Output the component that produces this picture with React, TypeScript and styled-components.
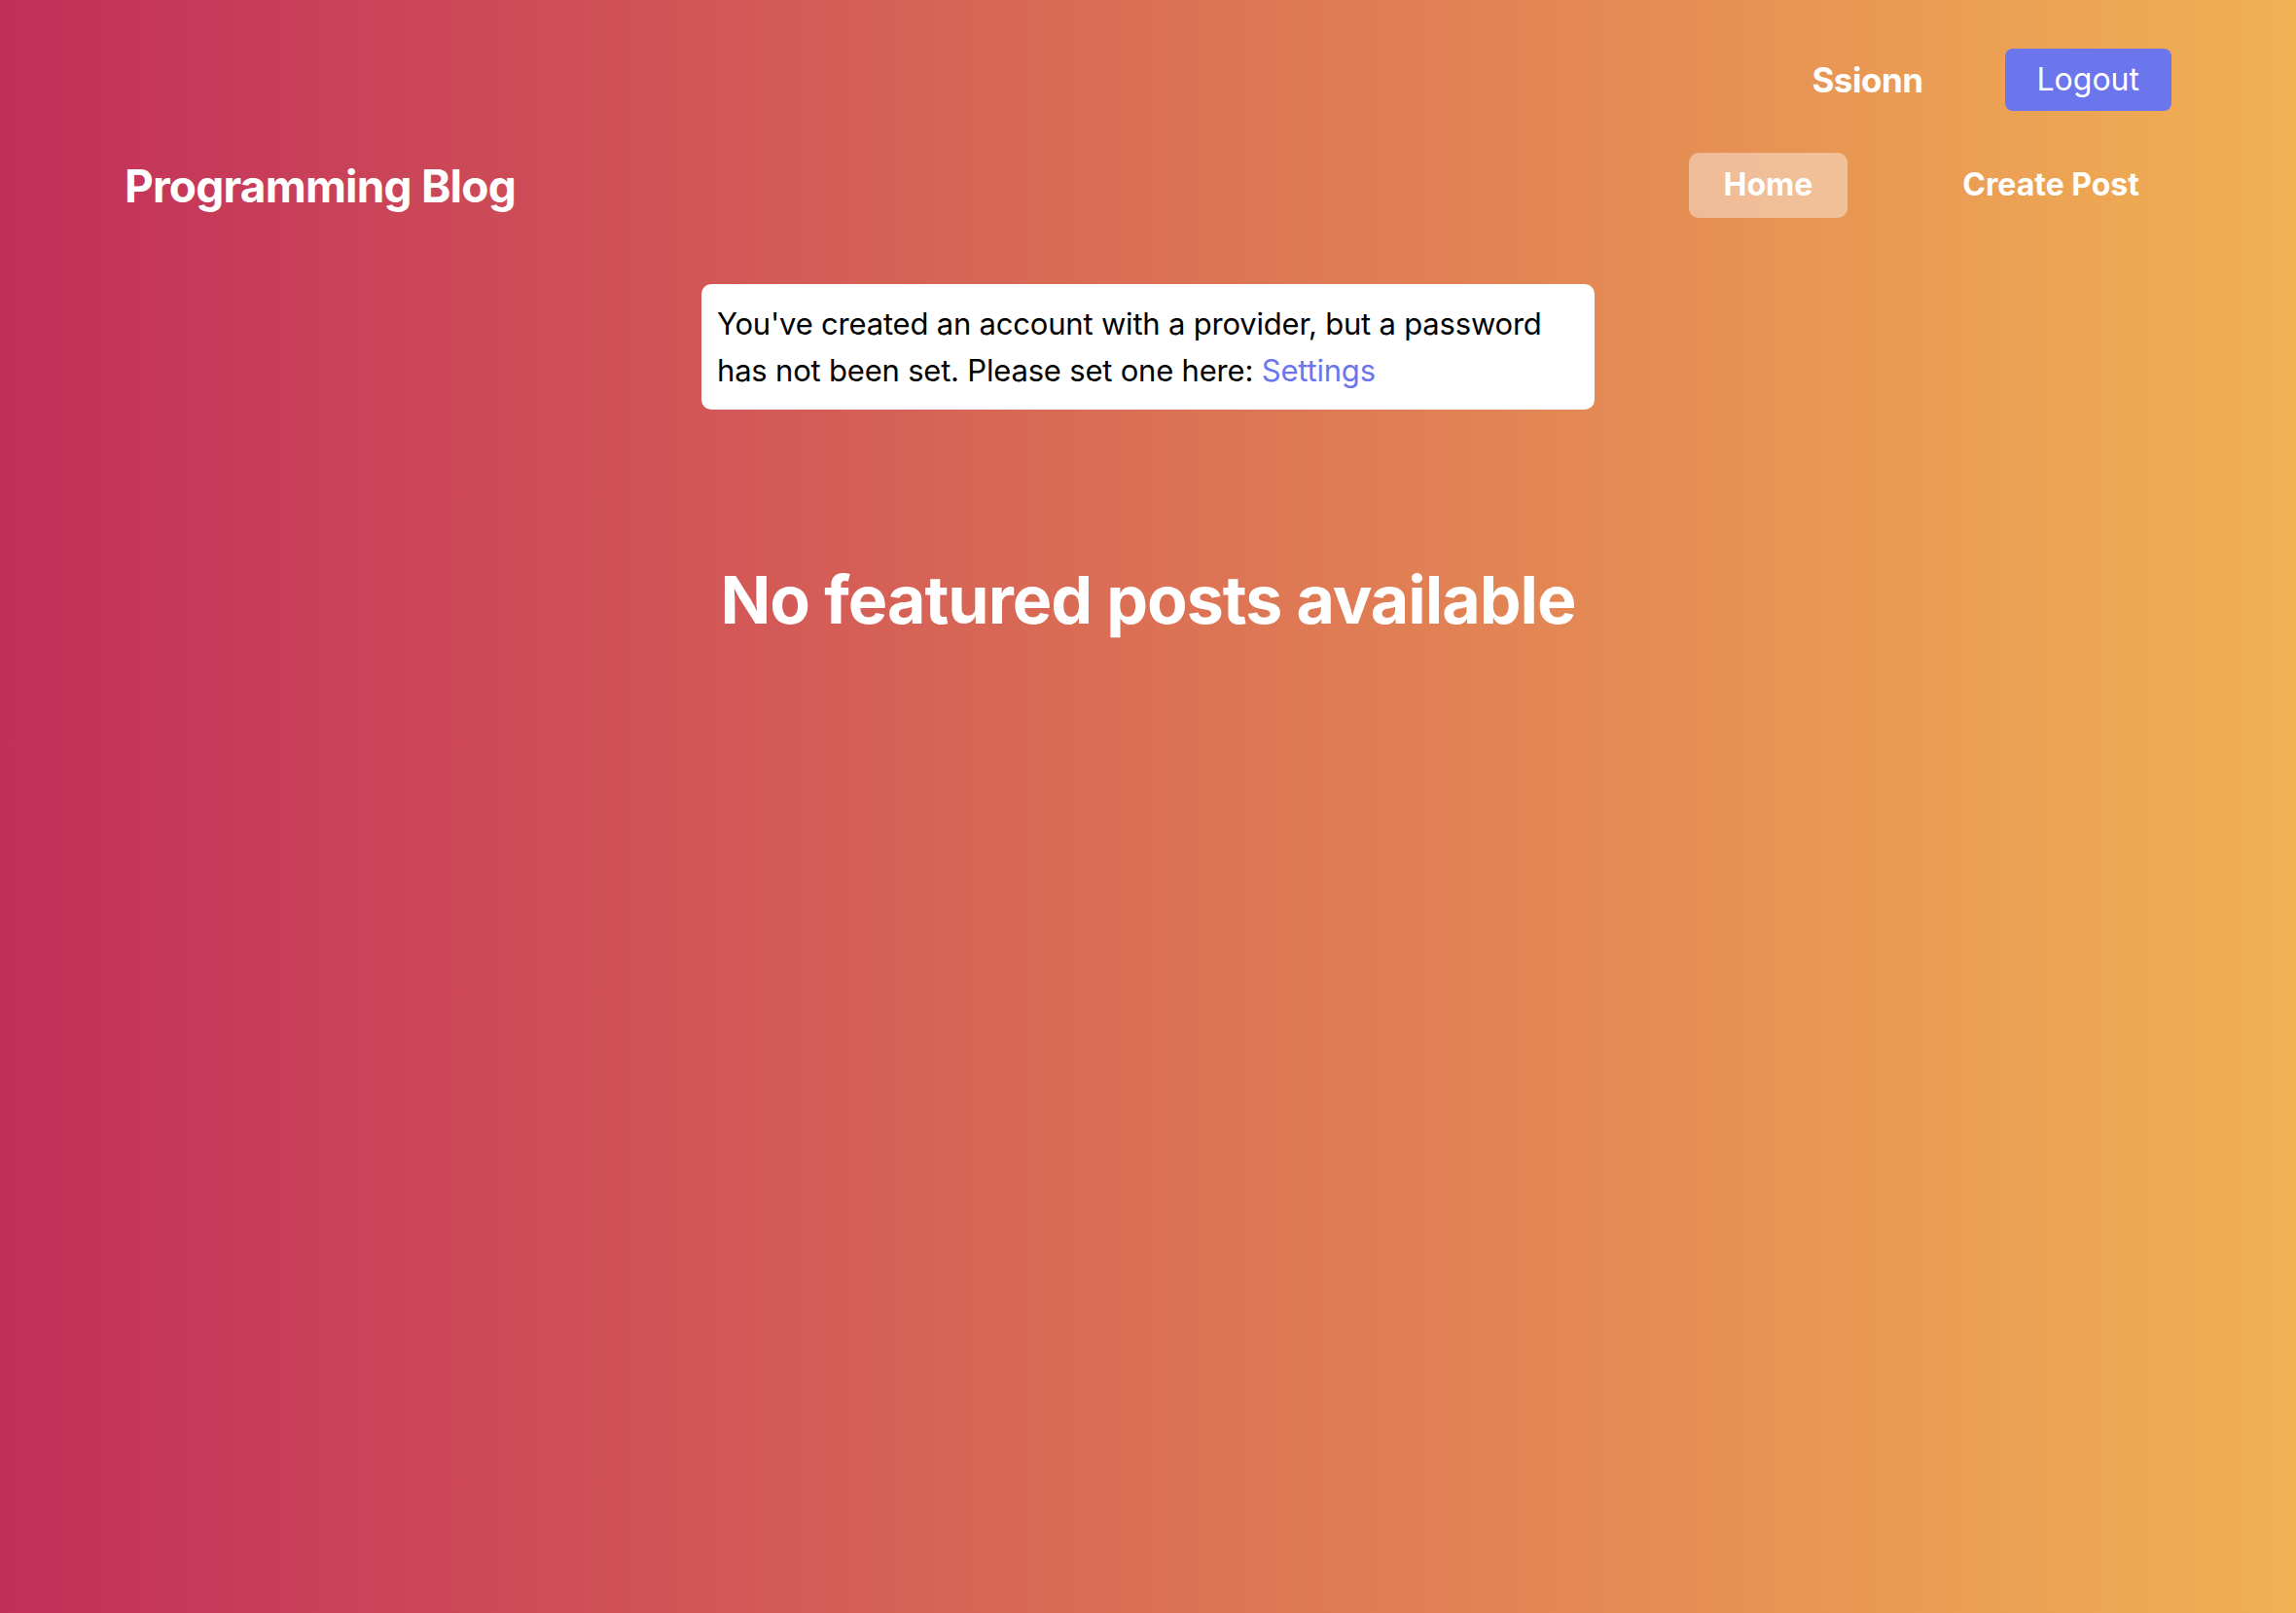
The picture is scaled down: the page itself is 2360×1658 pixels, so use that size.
import React from "react";
import styled, { createGlobalStyle } from "styled-components";

const GlobalStyle = createGlobalStyle`
  html, body {
    margin: 0;
    padding: 0;
  }
  body {
    font-family: Inter, "Noto Sans", "Liberation Sans", sans-serif;
    -webkit-font-smoothing: antialiased;
  }
`;

const Page = styled.div`
  min-height: 100vh;
  background: linear-gradient(to right, #c22e5a 0%, #db7055 50%, #f1b153 100%);
  color: white;
`;

const TopBar = styled.div`
  display: flex;
  justify-content: flex-end;
  align-items: center;
  gap: 84px;
  padding: 50px 128px 0;
`;

const UserName = styled.span`
  font-size: 35px;
  font-weight: 700;
  line-height: 48px;
  letter-spacing: -0.5px;
`;

const LogoutButton = styled.button`
  background-color: #6b76ec;
  color: white;
  border: none;
  border-radius: 8px;
  padding: 8px 33px;
  font-family: inherit;
  font-size: 32px;
  line-height: 48px;
  cursor: pointer;
`;

const NavBar = styled.nav`
  display: flex;
  justify-content: space-between;
  align-items: center;
  padding: 43px 125px 0 128px;
`;

const Brand = styled.h1`
  margin: 0;
  font-size: 46px;
  font-weight: 700;
  line-height: 64px;
  letter-spacing: -0.8px;
`;

const NavLinks = styled.div`
  display: flex;
  align-items: center;
  gap: 82px;
`;

const NavLink = styled.a<{ $active?: boolean }>`
  display: block;
  padding: 9px 36px 10px;
  border-radius: 10px;
  font-size: 32px;
  font-weight: 700;
  line-height: 48px;
  color: white;
  text-decoration: none;
  background-color: ${(p) => (p.$active ? "rgba(255, 255, 255, 0.4)" : "transparent")};
`;

const Main = styled.main`
  display: flex;
  flex-direction: column;
  align-items: center;
  padding-top: 68px;
`;

const Notice = styled.div`
  box-sizing: border-box;
  width: 918px;
  padding: 17px 16px 16px;
  background: white;
  color: #000;
  border-radius: 10px;
  font-size: 31px;
  line-height: 48px;
  letter-spacing: -0.2px;
`;

const NoticeLink = styled.a`
  color: #6b76ec;
  text-decoration: none;
`;

const EmptyHeading = styled.h2`
  margin: 155px 0 0;
  font-size: 68px;
  font-weight: 700;
  line-height: 80px;
  letter-spacing: -1px;
  color: white;
`;

const App = () => {
  return (
    <Page>
      <GlobalStyle />
      <header>
        <TopBar>
          <UserName>Ssionn</UserName>
          <LogoutButton>Logout</LogoutButton>
        </TopBar>
        <NavBar>
          <Brand>Programming Blog</Brand>
          <NavLinks>
            <NavLink href="#" $active>
              Home
            </NavLink>
            <NavLink href="#">Create Post</NavLink>
          </NavLinks>
        </NavBar>
      </header>
      <Main>
        <Notice>
          You've created an account with a provider, but a password has not
          been set. Please set one here: <NoticeLink href="#">Settings</NoticeLink>
        </Notice>
        <EmptyHeading>No featured posts available</EmptyHeading>
      </Main>
    </Page>
  );
};

export default App;
